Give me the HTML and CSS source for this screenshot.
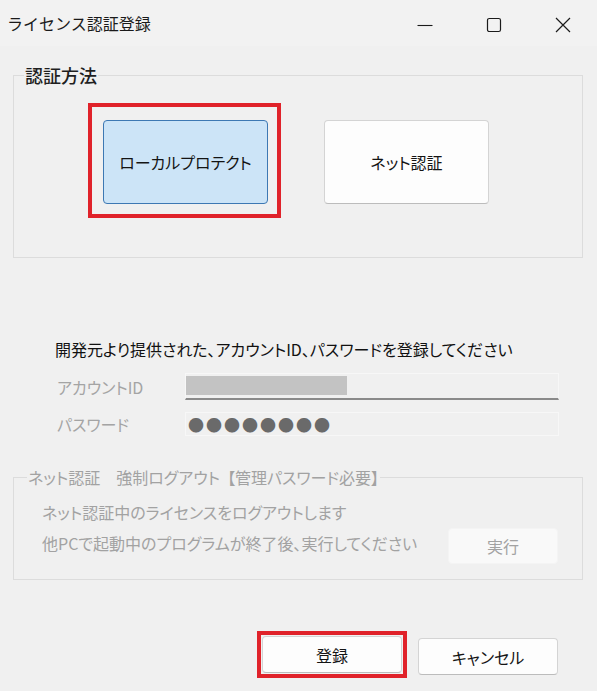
FILE: index.html
```html
<!DOCTYPE html>
<html lang="ja">
<head>
<meta charset="utf-8">
<title>ライセンス認証登録</title>
<link rel="stylesheet" href="styles.css">
</head>
<body>
<div class="window">
  <header class="titlebar">
    <span class="title">ライセンス認証登録</span>
    <div class="controls">
      <span class="ctl"><svg width="16" height="16" viewBox="0 0 16 16"><path d="M0.5 8.5h15" stroke="#1b1b1b" stroke-width="1.1" fill="none"/></svg></span>
      <span class="ctl"><svg width="16" height="16" viewBox="0 0 16 16"><rect x="1.5" y="1.5" width="13" height="13" rx="1.8" fill="none" stroke="#1b1b1b" stroke-width="1.2"/></svg></span>
      <span class="ctl"><svg width="16" height="16" viewBox="0 0 16 16"><path d="M1 1l14 14M15 1L1 15" stroke="#1b1b1b" stroke-width="1.2" fill="none"/></svg></span>
    </div>
  </header>

  <main class="body">
    <fieldset class="group method">
      <legend class="legend-strong">認証方法</legend>
      <div class="method-row">
        <div class="mark">
          <button class="btn big selected">ローカルプロテクト</button>
        </div>
        <button class="btn big net">ネット認証</button>
      </div>
    </fieldset>

    <section class="login">
      <p class="instr">開発元より提供された、アカウントID、パスワードを登録してください</p>
      <div class="row">
        <span class="lbl">アカウントID</span>
        <div class="field idfield"><div class="fill"></div></div>
      </div>
      <div class="row row-pw">
        <span class="lbl">パスワード</span>
        <div class="field pwfield"><span class="dots">●●●●●●●●</span></div>
      </div>
    </section>

    <fieldset class="group logout">
      <legend class="legend-dim">ネット認証　強制ログアウト<span class="bracket">【管理パスワード必要】</span></legend>
      <p class="dim line1">ネット認証中のライセンスをログアウトします</p>
      <div class="line2">
        <span class="dim">他PCで起動中のプログラムが終了後、実行してください</span>
        <button class="btn run">実行</button>
      </div>
    </fieldset>

    <div class="footer">
      <div class="mark mark-sm">
        <button class="btn foot">登録</button>
      </div>
      <button class="btn foot cancel">キャンセル</button>
    </div>
  </main>
</div>
</body>
</html>
```

FILE: styles.css
```css
* { box-sizing: border-box; }

html, body {
  margin: 0;
  padding: 0;
  background: #f0f0f0;
}

body {
  font-family: "Noto Sans CJK JP", "Noto Sans", sans-serif;
  color: #1a1a1a;
  font-size: 16px;
  width: 597px;
  height: 691px;
  overflow: hidden;
}

.window {
  width: 597px;
  height: 691px;
  background: #f0f0f0;
}

/* title bar */
.titlebar {
  height: 46px;
  display: flex;
  align-items: center;
  padding-left: 7px;
  background: #f2f2f2;
}

.title {
  font-size: 16px;
  line-height: 20px;
  color: #1a1a1a;
  flex: 1;
}

.controls {
  display: flex;
  height: 46px;
  margin-top: 3px;
}

.ctl {
  width: 69px;
  display: flex;
  align-items: center;
  justify-content: center;
}

.ctl svg { display: block; }

/* groups */
.group {
  margin: 0 14px 0 13px;
  border: 1px solid #dcdcdc;
  padding: 0;
  min-width: 0;
}

.group legend {
  padding: 0 1px;
  line-height: 20px;
}

.method {
  margin-top: 19px;
  padding: 18px 0 39px 0;
}

.legend-strong {
  margin-left: 10px;
  font-size: 18px;
  font-weight: 500;
  color: #1f1f1f;
}

.method-row {
  display: flex;
  align-items: flex-start;
  padding-left: 74px;
}

.mark {
  border: 4px solid #e0222a;
  padding: 13px 9px 10px 11px;
}

.btn {
  font-family: "Noto Sans CJK JP", "Noto Sans", sans-serif;
  font-feature-settings: "palt";
  font-size: 16px;
  color: #141414;
  background: #fdfdfd;
  border: 1px solid #d4d4d4;
  border-bottom-color: #bcbcbc;
  border-radius: 4px;
  padding: 0;
  margin: 0;
}

.big {
  width: 165px;
  height: 84px;
}

.selected {
  background: #cce4f7;
  border: 1px solid #3d78b3;
}

.net {
  margin-left: 43px;
  margin-top: 17px;
}

/* login section */
.login {
  margin-top: 80px;
  padding-left: 57px;
}

.instr {
  margin: 0 0 0 -2px;
  font-size: 16px;
  line-height: 22px;
  font-feature-settings: "palt";
  color: #111;
}

.row {
  display: flex;
  align-items: center;
  margin-top: 13px;
}

.row-pw { margin-top: 12px; }

.lbl {
  width: 128px;
  font-size: 16px;
  line-height: 22px;
  color: #a4a4a4;
  font-feature-settings: "palt";
}

.field {
  width: 374px;
  border: 1px solid #f7f7f7;
}

.idfield {
  padding: 2px 0 3px 0;
  border-bottom: 2px solid #8a8a8a;
}

.fill {
  width: 161px;
  height: 19px;
  background: #c3c3c3;
}

.pwfield {
  height: 24px;
  padding-left: 2px;
  display: flex;
  align-items: center;
}

.dots {
  font-family: "Noto Sans CJK JP", sans-serif;
  font-size: 16px;
  line-height: 20px;
  letter-spacing: 2px;
  color: #6a6a6a;
}

/* logout group */
.logout {
  margin-top: 31px;
  padding: 14px 24px 15px 0;
}

.legend-dim {
  margin-left: 13px;
  font-size: 16px;
  color: #a2a2a2;
  font-feature-settings: "palt";
}

.bracket { margin-left: 7px; }

.dim {
  color: #a2a2a2;
  font-size: 16px;
  line-height: 22px;
  font-feature-settings: "palt";
}

.line1 {
  margin: 0;
  padding-left: 28px;
}

.line2 {
  display: flex;
  align-items: flex-start;
  margin-top: 5px;
  padding-left: 28px;
}

.line2 .dim { padding-top: 4px; }

.run {
  margin-left: auto;
  width: 110px;
  height: 36px;
  background: #f9f9f9;
  border: 1px solid #f4f4f4;
  color: #a2a2a2;
}

/* footer */
.footer {
  display: flex;
  align-items: flex-start;
  margin-top: 51px;
  padding-left: 257px;
}

.mark-sm { padding: 1px; }

.foot {
  width: 140px;
  height: 37px;
}

.cancel {
  margin-left: 11px;
  margin-top: 7px;
}
```
